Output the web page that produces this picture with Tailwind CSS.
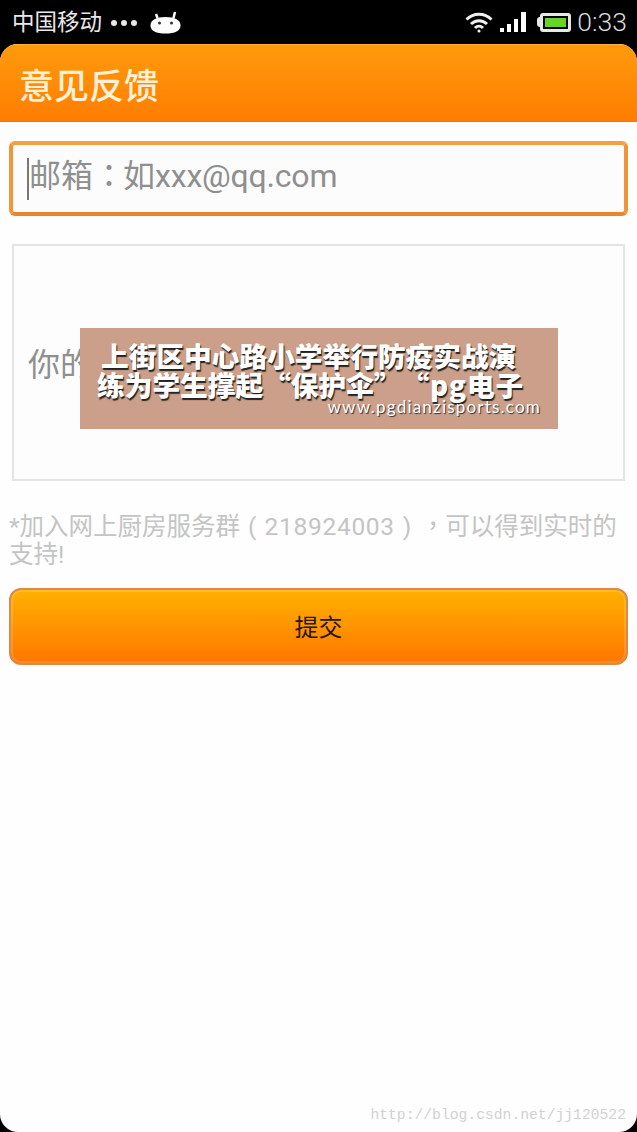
<!DOCTYPE html>
<html lang="zh-CN">
<head>
    <meta charset="UTF-8">
    <meta name="viewport" content="width=device-width, initial-scale=1.0">
    <title>意见反馈</title>
    <script src="https://cdn.jsdelivr.net/npm/@tailwindcss/browser@4"></script>
</head>
<body class="bg-black font-['Roboto','Noto_Sans_CJK_SC',sans-serif] [text-spacing-trim:space-all]">
    <div class="relative w-[637px] h-[1132px] overflow-hidden bg-black">
        <!-- status bar -->
        <div class="h-[44px] flex items-center justify-between pl-[12px] pr-[10px] text-[#e8e8e8]">
            <div class="flex items-center">
                <span class="text-[22.5px] leading-none">中国移动</span>
                <div class="flex gap-[4px] ml-[9px] mt-[2px]">
                    <span class="w-[6px] h-[6px] rounded-full bg-[#e8e8e8]"></span>
                    <span class="w-[6px] h-[6px] rounded-full bg-[#e8e8e8]"></span>
                    <span class="w-[6px] h-[6px] rounded-full bg-[#e8e8e8]"></span>
                </div>
                <svg class="ml-[13px]" width="31" height="23" viewBox="0 0 31 23">
                    <path d="M0.500 14.500C0.500 9 6 6 15.500 6S30.500 9 30.500 14.500S25 22.500 15.500 22.500S0.500 20 0.500 14.500Z" fill="#fff"/>
                    <path d="M7.500 7L6 3M23.500 7L25 1" stroke="#fff" stroke-width="2.500" fill="none"/>
                    <circle cx="9.500" cy="12" r="1.500" fill="#333"/>
                    <circle cx="21.500" cy="12" r="1.500" fill="#333"/>
                </svg>
            </div>
            <div class="flex items-center">
                <svg width="28" height="22" viewBox="0 0 28 22" fill="none" stroke="#f0f0f0" stroke-width="3">
                    <path d="M1.500 8.500C8.500 1.500 19.500 1.500 26.500 8.500"/>
                    <path d="M6 13C10.500 8.500 17.500 8.500 22 13"/>
                    <path d="M10 17C12.500 14.500 15.500 14.500 18 17"/>
                    <circle cx="14" cy="20" r="1.500" fill="#f0f0f0" stroke="none"/>
                </svg>
                <div class="flex items-end gap-[3px] ml-[7px] h-[20px]">
                    <span class="w-[4px] h-[4px] bg-white"></span>
                    <span class="w-[4px] h-[8px] bg-white"></span>
                    <span class="w-[4px] h-[13px] bg-white"></span>
                    <span class="w-[5px] h-[20px] bg-white"></span>
                </div>
                <div class="flex items-center ml-[11px]">
                    <span class="w-[3px] h-[10px] bg-[#e8e8e8] rounded-l-sm"></span>
                    <div class="w-[31px] h-[19px] border-[3px] border-[#e8e8e8] rounded-[3px] p-[2px] bg-black">
                        <div class="w-full h-full bg-[#66d427]"></div>
                    </div>
                </div>
                <span class="ml-[6px] text-[26.5px] leading-none font-light text-[#dcdcdc]">0:33</span>
            </div>
        </div>

        <!-- app window -->
        <div class="h-[1088px] rounded-t-[18px] rounded-b-[18px] bg-[#fefefe] overflow-hidden">
            <header class="h-[78px] flex items-center pl-[19px] pt-[9px] bg-gradient-to-b from-[#ff9a0c] to-[#ff7d02] border-t border-t-[#ffb040] border-b border-b-[#f07a10]">
                <h1 class="text-[35px] leading-none font-medium text-[#fff0d8]">意见反馈</h1>
            </header>

            <main class="px-[9px] pt-[19px]">
                <div class="h-[75px] flex items-center border-[4px] border-t-[#f5a040] border-x-[#f0953a] border-b-[#e8862c] rounded-[6px] bg-[#fcfcfc] pl-[14px] pb-[9px]">
                    <span class="w-[2px] h-[42px] bg-[#777] mt-[9px]"></span>
                    <span class="text-[32px] leading-none text-[#8f8f8f]">邮箱<span lang="zh-TW" class="inline-block w-[30px] font-['Noto_Sans_CJK_TC',sans-serif]">：</span>如<span class="tracking-[-0.2px]">xxx@qq.com</span></span>
                </div>

                <div class="mt-[28px] mx-[3px] h-[237px] border-2 border-[#e4e4e4] bg-[#fdfdfd] pl-[14px] pt-[103px]">
                    <span class="text-[32px] leading-none text-[#8f8f8f]">你的意见</span>
                </div>

                <p class="mt-[30px] h-[56px] text-[24.5px] leading-[28px] text-[#c4c4c4]">*加入网上厨房服务群<span class="inline-block w-[24.5px] text-center">(</span><span class="tracking-[0.7px]">218924003</span><span class="inline-block w-[24.5px] text-center">)</span><span lang="zh-TW" class="inline-block w-[26px] text-right font-['Noto_Sans_CJK_TC',sans-serif]">，</span>可以得到实时的支持!</p>

                <button class="mt-[21px] w-[619px] h-[77px] pt-[3px] rounded-[12px] border-2 border-[#d98a45] bg-gradient-to-b from-[#ffb000] to-[#ff7600] shadow-[inset_0_0_0_2px_#ffffff26] text-[24px] text-[#2a1500]">提交</button>
            </main>
        </div>

        <!-- ad banner over the form -->
        <div class="absolute left-[80px] top-[328px] w-[478px] h-[101px] bg-[#cb9f89] text-white font-black font-['Noto_Sans_CJK_SC',sans-serif] [text-shadow:1px_2px_1px_#222]">
            <p class="absolute left-[21px] top-[12px] text-[27.700px] leading-[30px] whitespace-nowrap">上街区中心路小学举行防疫实战演</p>
            <p class="absolute left-[17px] top-[41px] text-[27.700px] leading-[30px] whitespace-nowrap">练为学生撑起“保护伞”<span class="tracking-[0.8px]">“pg电子</span></p>
            <p class="absolute right-[17px] top-[69px] text-[17px] leading-[20px] font-normal tracking-[1.200px] font-['Lato',sans-serif] [text-shadow:1px_1px_1px_#333]">www.pgdianzisports.com</p>
        </div>

        <span class="absolute right-[11px] bottom-[9px] text-[14.700px] leading-none text-[#d2d2d2] font-['Liberation_Mono',monospace]">http://blog.csdn.net/jj120522</span>
    </div>
</body>
</html>
